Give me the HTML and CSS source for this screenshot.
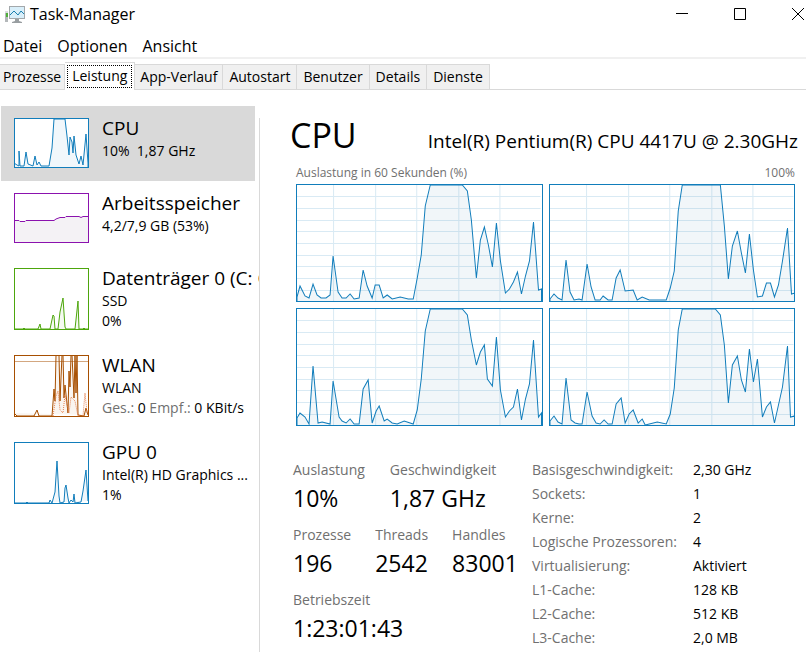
FILE: index.html
```html
<!DOCTYPE html>
<html lang="de">
<head>
    <meta charset="UTF-8">
    <meta name="viewport" content="width=device-width, initial-scale=1.0">
    <title>Task-Manager</title>
    <link rel="stylesheet" href="styles.css">
</head>
<body>
<!-- shared grid for the four core charts -->
<svg class="defs" aria-hidden="true">
    <defs>
        <path id="grid" d="M1 12.5H244M1 24.5H244M1 36.5H244M1 47.5H244M1 59.5H244M1 71.5H244M1 82.5H244M1 94.5H244M1 106.5H244M37.5 1V117M79.5 1V117M120.5 1V117M162.5 1V117M203.5 1V117"/>
    </defs>
</svg>

<header class="titlebar">
    <svg class="app-icon" viewBox="0 0 20 17" aria-hidden="true">
        <rect x="0" y="5" width="3" height="11" fill="#b4b8ba"/>
        <rect x="0" y="5" width="3" height="2" fill="#d9dcdd"/>
        <rect x="1" y="7" width="2" height="4" fill="#4fae3a"/>
        <rect x="4" y="0" width="16" height="13" fill="#a3a8ab"/>
        <rect x="5" y="1" width="14" height="11" fill="#d9effa"/>
        <path d="M5 9L9 5L13 9L16 5L19 8" fill="none" stroke="#1a7fae" stroke-width="1"/>
        <path d="M10 13H14V15L17 16V17H7V16L10 15Z" fill="#999ea1"/>
    </svg>
    <h1>Task-Manager</h1>
    <div class="window-buttons">
        <button aria-label="Minimieren"><svg viewBox="0 0 12 12"><path d="M0 5.5H12"/></svg></button>
        <button aria-label="Maximieren"><svg viewBox="0 0 12 12"><path d="M.5 .5H11.5V11.5H.5Z"/></svg></button>
        <button aria-label="Schließen"><svg viewBox="0 0 12 12"><path d="M0 0L12 12M12 0L0 12"/></svg></button>
    </div>
</header>

<nav class="menu">
    <button>Datei</button>
    <button>Optionen</button>
    <button>Ansicht</button>
</nav>

<div class="tabs" role="tablist">
    <button class="tab" role="tab">Prozesse</button>
    <button class="tab active" role="tab" aria-selected="true"><span>Leistung</span></button>
    <button class="tab" role="tab">App-Verlauf</button>
    <button class="tab" role="tab">Autostart</button>
    <button class="tab" role="tab">Benutzer</button>
    <button class="tab" role="tab">Details</button>
    <button class="tab" role="tab">Dienste</button>
</div>

<div class="content">
    <aside class="sidebar">
        <button class="item selected">
            <svg class="thumb cpu" viewBox="1 1 73 48" aria-hidden="true">
                <path class="plot" d="M0 50V45L3 47L5 48V33L6 48L10 48L12 34L14 46L19 48L21 38L23 47L25 44L27 48L35 48L38 30L40 1L51 1L53 18L55 37L56 19L58 24L59 35L60 18L62 37L65 46L67 38L69 47L72 16L74 45V50"/>
            </svg>
            <span class="item-text">
                <span class="item-name">CPU</span>
                <span class="item-line">10%&nbsp; 1,87 GHz</span>
            </span>
        </button>
        <button class="item">
            <svg class="thumb memory" viewBox="1 1 73 48" aria-hidden="true">
                <path class="plot" d="M0 50V27.5H5L6 28.5H11L12 27.5H40L42 26L46 24.5H51L52 23.5H65L67 24.5L69 23.5H75V50"/>
            </svg>
            <span class="item-text">
                <span class="item-name">Arbeitsspeicher</span>
                <span class="item-line">4,2/7,9 GB (53%)</span>
            </span>
        </button>
        <button class="item">
            <svg class="thumb tall disk" viewBox="1 1 73 60" aria-hidden="true">
                <path class="plot" d="M0 61L9 61L10 60L11 61H24L26 56L27 61H36L39 47L40 48L41 61H44L46 44L49 30L50 45L51 59L52 61H61L64 33L65 61H69L70 60L71 61H74"/>
            </svg>
            <span class="item-text">
                <span class="item-name">Datenträger 0 (C: G:)</span>
                <span class="item-line">SSD</span>
                <span class="item-line">0%</span>
            </span>
        </button>
        <button class="item">
            <svg class="thumb tall wlan" viewBox="1 1 73 60" aria-hidden="true">
                <path class="limit" d="M1 6.5H74"/>
                <path class="plot" d="M0 58L3 61H20L23 55L25 61H38L40 34L41 46L42 0H45L46 46L48 0H49L50 43L51 30L54 58L55 16L56 32L57 0H58L60 43L61 0L62 38L63 0L64 60L70 61L72 53L74 60"/>
                <path class="receive" d="M39 61L42 41L44 36L46 55L49 58L51 40L53 50L55 58L57 42L61 46L64 61H69L71 38L73 58"/>
            </svg>
            <span class="item-text">
                <span class="item-name">WLAN</span>
                <span class="item-line">WLAN</span>
                <span class="item-line"><span class="muted">Ges.:</span> 0 <span class="muted">Empf.:</span> 0 KBit/s</span>
            </span>
        </button>
        <button class="item">
            <svg class="thumb tall gpu" viewBox="1 1 73 60" aria-hidden="true">
                <path class="plot" d="M0 61H12L13 60L14 61H35L36 58L38 61L41 50L43 19L45 54L46 61L50 60L51 46L52 43L54 56L55 61L57 58L59 60L60 52L61 61L67 60L69 49L72 28L74 59"/>
            </svg>
            <span class="item-text">
                <span class="item-name">GPU 0</span>
                <span class="item-line">Intel(R) HD Graphics ...</span>
                <span class="item-line">1%</span>
            </span>
        </button>
    </aside>

    <main class="main">
        <div class="heading">
            <h2>CPU</h2>
            <p>Intel(R) Pentium(R) CPU 4417U @ 2.30GHz</p>
        </div>
        <div class="chart-labels">
            <span>Auslastung in 60 Sekunden (%)</span>
            <span>100%</span>
        </div>

        <div class="charts">
            <svg class="chart" viewBox="1 1 244 116" preserveAspectRatio="none">
                <use href="#grid"/>
                <path class="plot" d="M1 117V113L4 102L9 112L13 114L17 100L21 111L25 114L30 114L34 111L37 72L42 108L46 114L50 114L54 110L58 115L63 114L67 86L71 102L76 114L79 101L83 101L87 114L91 111L96 115L104 113L112 115L117 115L121 94L125 71L129 22L134 1L166 1L171 7L175 36L180 94L184 56L188 43L192 61L196 83L200 39L204 77L209 109L213 105L217 98L221 88L225 110L229 92L233 77L237 38L242 106L245 105V117"/>
            </svg>
            <svg class="chart" viewBox="1 1 244 116" preserveAspectRatio="none">
                <use href="#grid"/>
                <path class="plot" d="M1 117V115L5 110L9 114L13 116L17 76L21 108L25 116L30 115L33 116L38 80L42 103L46 116L51 116L54 112L59 116L63 116L67 94L71 86L76 107L84 106L88 116L93 113L100 116L117 116L121 104L125 87L129 27L133 1L171 1L175 42L179 95L183 62L188 47L192 69L196 89L200 50L204 86L208 113L213 112L217 99L221 99L225 113L229 101L233 77L238 44L242 110L245 109V117"/>
            </svg>
            <svg class="chart" viewBox="1 1 244 116" preserveAspectRatio="none">
                <use href="#grid"/>
                <path class="plot" d="M1 117V110L4 105L9 109L13 116L17 58L22 115L26 114L34 116L37 73L43 109L46 113L50 115L54 111L58 116L63 116L67 81L72 72L76 115L80 103L83 98L88 113L91 111L96 115L101 116L108 113L117 116L121 102L125 71L129 23L134 1L166 1L171 7L175 32L180 57L184 44L188 37L191 71L196 78L200 29L204 82L209 109L213 103L217 99L221 81L225 112L229 91L233 76L237 32L242 109L245 105V117"/>
            </svg>
            <svg class="chart" viewBox="1 1 244 116" preserveAspectRatio="none">
                <use href="#grid"/>
                <path class="plot" d="M1 117V113L5 108L9 114L13 116L17 70L22 112L26 115L30 116L33 116L38 84L43 108L47 115L51 116L55 112L59 116L63 116L67 96L72 90L76 115L80 106L84 102L89 115L93 111L96 117L108 114L117 116L121 106L125 80L129 22L133 1L166 1L171 7L175 37L179 95L183 57L188 48L192 72L196 84L200 41L204 74L208 51L213 109L217 99L221 94L225 115L233 79L238 38L241 109L245 108V117"/>
            </svg>
        </div>

        <div class="details">
            <div class="stats">
                <dl class="stat-row wide">
                    <div><dt>Auslastung</dt><dd>10%</dd></div>
                    <div><dt>Geschwindigkeit</dt><dd>1,87 GHz</dd></div>
                </dl>
                <dl class="stat-row">
                    <div><dt>Prozesse</dt><dd>196</dd></div>
                    <div><dt>Threads</dt><dd>2542</dd></div>
                    <div><dt>Handles</dt><dd>83001</dd></div>
                </dl>
                <dl class="stat-row">
                    <div><dt>Betriebszeit</dt><dd>1:23:01:43</dd></div>
                </dl>
            </div>
            <table class="specs">
                <tr><th scope="row">Basisgeschwindigkeit:</th><td>2,30 GHz</td></tr>
                <tr><th scope="row">Sockets:</th><td>1</td></tr>
                <tr><th scope="row">Kerne:</th><td>2</td></tr>
                <tr><th scope="row">Logische Prozessoren:</th><td>4</td></tr>
                <tr><th scope="row">Virtualisierung:</th><td>Aktiviert</td></tr>
                <tr><th scope="row">L1-Cache:</th><td>128 KB</td></tr>
                <tr><th scope="row">L2-Cache:</th><td>512 KB</td></tr>
                <tr><th scope="row">L3-Cache:</th><td>2,0 MB</td></tr>
            </table>
        </div>
    </main>
</div>
</body>
</html>
```
FILE: styles.css
```css
* {
    box-sizing: border-box;
}

body {
    margin: 0;
    min-height: 100vh;
    display: flex;
    flex-direction: column;
    font-family: "Open Sans", "Noto Sans", sans-serif;
    font-size: 14px;
    color: #000;
    background-color: #fff;
}

h1, h2, p, dl, dd {
    margin: 0;
    font-weight: normal;
}

button {
    font: inherit;
    color: inherit;
    border: none;
    background: none;
    padding: 0;
}

.defs {
    display: none;
}

/* title bar */
.titlebar {
    display: flex;
    align-items: center;
    height: 28px;
    padding: 0 2px 0 5px;
}

.app-icon {
    width: 20px;
    height: 17px;
    margin-right: 5px;
}

.titlebar h1 {
    flex: 1;
    font-size: 16px;
    line-height: 28px;
}

.window-buttons {
    display: flex;
    gap: 46px;
}

.window-buttons svg {
    display: block;
    width: 12px;
    height: 12px;
    fill: none;
    stroke: #000;
}

.menu {
    display: flex;
    gap: 15px;
    height: 31px;
    padding: 6px 3px 0;
    font-size: 16px;
    line-height: 24px;
    border-bottom: 2px solid #f0f0f0;
}

.menu button {
    height: 24px;
}

/* tabs */
.tabs {
    display: flex;
    align-items: flex-end;
    height: 31px;
    border-bottom: 1px solid #d9d9d9;
}

.tab {
    height: 25px;
    padding: 0 5px;
    line-height: 24px;
    white-space: nowrap;
    background-color: #f0f0f0;
    border-top: 1px solid #d9d9d9;
    border-right: 1px solid #d9d9d9;
}

.tab:first-child {
    padding: 0 3px;
}

.tab:nth-child(n+4) {
    padding: 0 6px;
}

.tab.active {
    height: 28px;
    margin-bottom: -1px;
    padding: 2px;
    background-color: #fff;
}

.tab.active span {
    display: block;
    height: 23px;
    padding: 0 4px;
    line-height: 20px;
    border: 1px dotted #000;
}

.content {
    flex: 1;
    display: flex;
    padding-top: 16px;
}

/* sidebar */
.sidebar {
    width: 259px;
    flex: none;
    padding-left: 1px;
}

.item {
    display: flex;
    gap: 13px;
    width: 254px;
    padding: 12px 0 13px 13px;
    text-align: left;
    align-items: flex-start;
}

.item.selected {
    background-color: #d9d9d9;
}

.thumb {
    flex: none;
    width: 75px;
    height: 50px;
    border: 1px solid currentColor;
    background-color: #fff;
}

.thumb.tall {
    height: 62px;
}

.thumb .plot {
    fill: currentColor;
    fill-opacity: 0.06;
    stroke: currentColor;
}

.cpu, .gpu {
    color: #117dbb;
}

.memory {
    color: #8b12ae;
}

.memory .plot {
    fill: #4b2a55;
}

.disk {
    color: #4da60c;
}

.wlan {
    color: #a74f01;
}

.limit {
    stroke: #d3a780;
}

.receive {
    fill: none;
    stroke: #e5814f;
    stroke-dasharray: 1 1;
}

.item-text {
    width: 157px;
    flex: none;
    white-space: nowrap;
    line-height: 20px;
}

.item-name {
    display: block;
    overflow-x: clip;
    font-size: 19px;
    line-height: 20px;
    margin-bottom: 3px;
}

.item-line {
    display: block;
}

.item-line:last-child {
    margin-bottom: -1px;
}

.muted {
    color: #707070;
}

/* main panel */
.main {
    flex: 1;
    margin-top: 12px;
    padding: 0 11px 0 33px;
    border-left: 1px solid #d9d9d9;
}

.heading {
    display: flex;
    justify-content: space-between;
    align-items: baseline;
    margin: 0 -3px 0 -3px;
    height: 46px;
    white-space: nowrap;
}

.heading h2 {
    font-size: 34px;
    line-height: 34px;
}

.heading p {
    font-size: 19px;
}

.chart-labels {
    display: flex;
    justify-content: space-between;
    padding-left: 3px;
    font-size: 12px;
    line-height: 18px;
    color: #707070;
}

.charts {
    display: grid;
    grid-template-columns: 1fr 1fr;
    gap: 6px;
    padding: 2px 0 0 3px;
}

.chart {
    display: block;
    width: 100%;
    height: 118px;
    border: 1px solid #117dbb;
}

.chart use {
    fill: none;
    stroke: #d9eaf4;
}

.chart .plot {
    fill: #116a9f;
    fill-opacity: 0.06;
    stroke: #117dbb;
}

.details {
    display: flex;
    align-items: flex-start;
    padding-top: 32px;
}

.stats {
    width: 239px;
    flex: none;
}

.stat-row {
    display: flex;
    gap: 24px;
    height: 65px;
}

.stat-row.wide {
    gap: 25px;
}

dt {
    line-height: 24px;
    color: #707070;
}

dd {
    font-size: 23px;
    line-height: 32px;
}

.specs {
    flex: 1;
    border-collapse: collapse;
}

.specs th, .specs td {
    padding: 0;
    line-height: 24px;
    text-align: left;
    font-weight: normal;
}

.specs th {
    width: 161px;
    color: #707070;
}
```
